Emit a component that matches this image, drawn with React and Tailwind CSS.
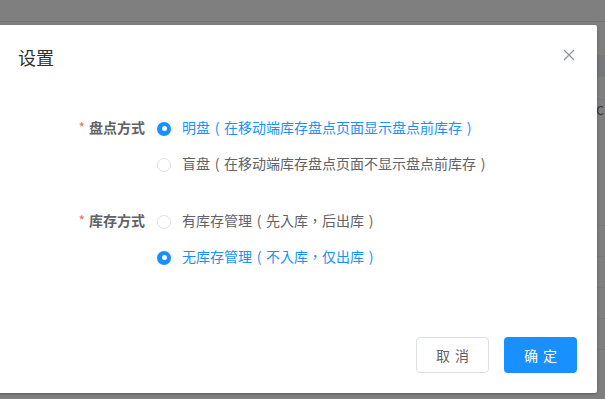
import { useState } from 'react';

// full-width brackets drawn centred in their em box, as the reference font does
function CjkText({ text }) {
  return text.split('').map((ch, i) => {
    if (ch === '（' || ch === '）') {
      return (
        <span key={i} className="inline-block w-[14px] text-center">
          {ch === '（' ? '(' : ')'}
        </span>
      );
    }
    return ch;
  });
}

function Radio({ checked, label, onClick }) {
  return (
    <div className="flex items-center h-[20px] cursor-pointer" onClick={onClick}>
      {checked ? (
        <span className="w-[14px] h-[14px] rounded-full bg-[#1890ff] flex items-center justify-center mt-[3px]">
          <span className="w-[5px] h-[5px] rounded-full bg-white" />
        </span>
      ) : (
        <span className="w-[14px] h-[14px] rounded-full border border-[#dcdfe6] bg-white mt-[3px]" />
      )}
      <span
        className={
          "ml-[11px] text-[14px] leading-[20px] whitespace-nowrap font-['Noto_Sans_CJK_TC',sans-serif] " +
          (checked ? 'text-[#1890ff]' : 'text-[#606266]')
        }
      >
        <CjkText text={label} />
      </span>
    </div>
  );
}

function FormItem({ label, options, value, onChange }) {
  return (
    <div className="flex items-start">
      <div className="w-[159px] shrink-0 pr-[12px] text-right h-[20px] leading-[20px] text-[14px] font-bold text-[#606266]">
        <span className="text-[#f56c6c] font-normal mr-[4px]">*</span>
        {label}
      </div>
      <div className="flex flex-col gap-[16px]">
        {options.map((o, i) => (
          <Radio key={i} checked={value === i} label={o} onClick={() => onChange(i)} />
        ))}
      </div>
    </div>
  );
}

export default function App() {
  const [pandian, setPandian] = useState(0);
  const [kucun, setKucun] = useState(1);

  return (
    <div className="relative w-[605px] h-[399px] overflow-hidden bg-white font-['Noto_Sans_CJK_SC','Noto_Sans',sans-serif]">
      {/* page behind the overlay */}
      <div className="flex flex-col">
        <div className="h-[22px] border-b border-[#e8e8e8]" />
        <div className="h-[33px]" />
        <div className="h-[22px] bg-[#e6f2fa]" />
        <div className="h-[23px] border-b border-[#ebeef5]" />
        <div className="h-[31px] flex justify-end pr-[1px] text-[12px] leading-[20px] text-[#606266]">C</div>
        <div className="h-[95px] border-b border-[#ebeef5]" />
        <div className="h-[31px] border-b border-[#ebeef5]" />
        <div className="h-[31px] border-b border-[#ebeef5]" />
        <div className="h-[31px] border-b border-[#ebeef5]" />
        <div className="h-[31px] border-b border-[#ebeef5]" />
      </div>
      <div className="absolute inset-0 bg-black/50" />

      {/* dialog */}
      <div className="absolute left-[-2px] top-[25px] w-[599px] h-[368px] bg-white rounded-[2px] shadow-[0_1px_3px_rgba(0,0,0,0.3)] flex flex-col">
        <div className="flex items-center justify-between pt-[20px] pl-[20px] pr-[22px]">
          <span className="text-[18px] leading-[24px] text-[#303133]">设置</span>
          <svg width="12" height="12" viewBox="0 0 12 12" className="mt-[-5px]">
            <path d="M1 1 L11 11 M11 1 L1 11" stroke="#909399" strokeWidth="1.2" fill="none" />
          </svg>
        </div>

        <div className="flex flex-col gap-[37px] pt-[48px]">
          <FormItem
            label="盘点方式"
            value={pandian}
            onChange={setPandian}
            options={['明盘（在移动端库存盘点页面显示盘点前库存）', '盲盘（在移动端库存盘点页面不显示盘点前库存）']}
          />
          <FormItem
            label="库存方式"
            value={kucun}
            onChange={setKucun}
            options={['有库存管理（先入库，后出库）', '无库存管理（不入库，仅出库）']}
          />
        </div>

        <div className="mt-auto flex justify-end gap-[15px] pr-[20px] pb-[20px]">
          <button className="w-[73px] h-[36px] border border-[#dcdfe6] rounded-[4px] bg-white text-[14px] text-[#606266]">
            <span className="mr-[5px]">取</span>消
          </button>
          <button className="w-[73px] h-[36px] rounded-[4px] bg-[#1890ff] text-[14px] text-white">
            <span className="mr-[5px]">确</span>定
          </button>
        </div>
      </div>
    </div>
  );
}
